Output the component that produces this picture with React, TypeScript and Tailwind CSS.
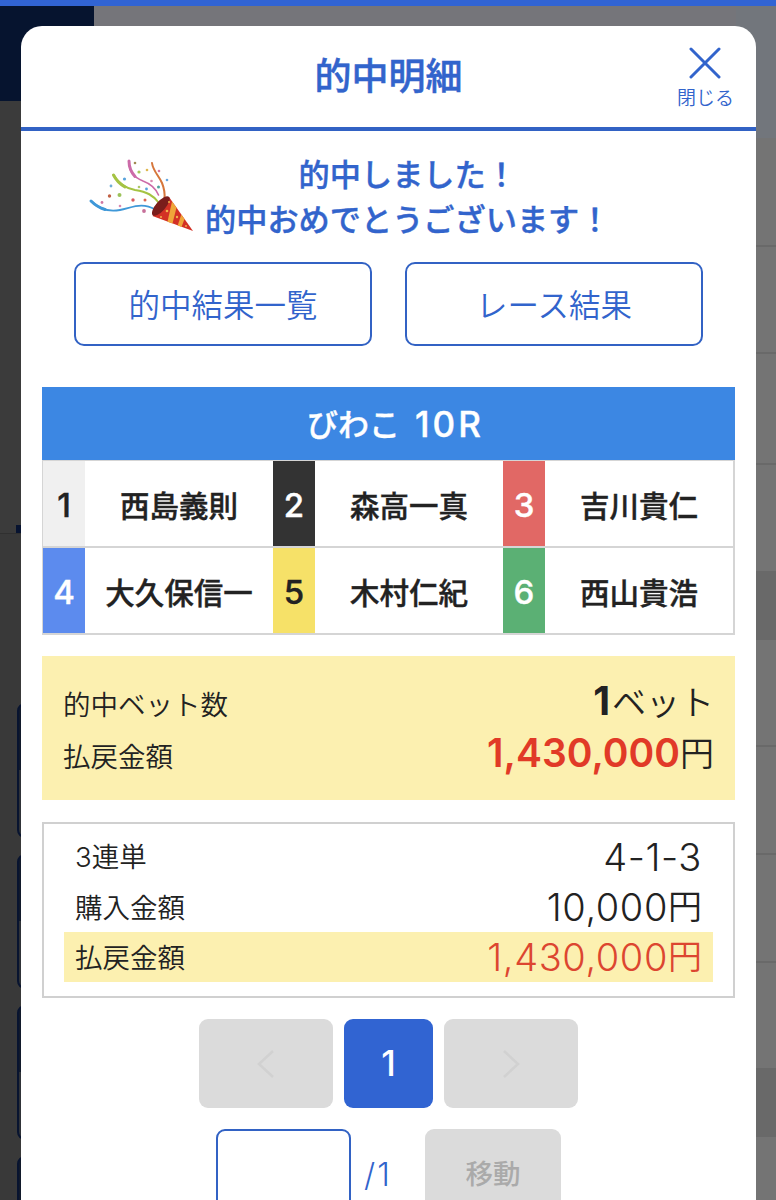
import type { ReactNode } from 'react'
import { clsx } from 'clsx'

type Racer = { no: number; name: string; color: string }

const RACERS: Racer[] = [
  { no: 1, name: '西島義則', color: 'bg-[#f0f0f0] text-[#222]' },
  { no: 2, name: '森高一真', color: 'bg-[#333] text-white' },
  { no: 3, name: '吉川貴仁', color: 'bg-[#e16865] text-white' },
  { no: 4, name: '大久保信一', color: 'bg-[#5c8bee] text-white' },
  { no: 5, name: '木村仁紀', color: 'bg-[#f6e168] text-[#222]' },
  { no: 6, name: '西山貴浩', color: 'bg-[#5bb074] text-white' },
]

// row heights of the dimmed list on the right edge
const LIST_ROWS = [
  'h-[109px]',
  'h-[107px]',
  'h-[111px]',
  'h-[108px]',
  'h-[67px] bg-[#696969]',
  'h-[107px]',
  'h-[108px]',
  'h-[108px]',
  'h-[107px]',
  'h-[67px] bg-[#696969]',
  'h-[107px]',
]

function Num({ children, className }: { children: ReactNode; className?: string }) {
  return <span className={clsx("font-['Inter','Noto_Sans_CJK_JP',sans-serif]", className)}>{children}</span>
}

function Backdrop() {
  return (
    <div className="absolute inset-0 flex flex-col overflow-hidden">
      <div className="h-1.5 shrink-0 bg-[#3164d4]" />
      <div className="flex flex-1 justify-between bg-[#75757a]">
        <div className="flex w-[94px] flex-col">
          <div className="h-[95px] bg-[#06142f]" />
          <div className="flex h-[432px] w-full items-end bg-[#3b3b3b]">
            <div className="ml-4 h-2 w-10 bg-[#071330]" />
          </div>
          <div className="flex flex-1 flex-col items-start gap-[16px] border-t border-[#303030] bg-[#393939] pt-[169px] pl-[17px]">
            {[0, 1, 2, 3].map((i) => (
              <div key={i} className="h-[135px] w-16 shrink-0 rounded-lg border-2 border-[#081430] bg-[linear-gradient(#121a2b_50%,#303338_50%)]" />
            ))}
          </div>
        </div>
        <div className="flex w-[40px] flex-col bg-[#747474]">
          <div className="h-[132px] shrink-0 bg-[#72767c]" />
          {LIST_ROWS.map((row, i) => (
            <div key={i} className={clsx('shrink-0 border-b-2 border-[#696969]', row)} />
          ))}
        </div>
      </div>
    </div>
  )
}

function PartyPopper() {
  return (
    <svg width="106" height="76" viewBox="0 0 106 76" fill="none" className="shrink-0">
      <g strokeLinecap="round">
        <path d="M3 44C12 53 22 55 32 53C46 50 54 45 68 53" stroke="#3f98d8" strokeWidth="1.8" />
        <path d="M3 44C7 48 12 51 17 52.500" stroke="#3f98d8" strokeWidth="3" />
        <path d="M25.500 18C30 26 37 31 47 33C59 35 65 38 71 46" stroke="#a5c343" strokeWidth="2" />
        <path d="M25.500 18C28 23 32 27 37 30" stroke="#a5c343" strokeWidth="3" />
        <path d="M41 4C41 16 46 20 55 24C63 27 68 32 70.500 38" stroke="#cc6ba8" strokeWidth="1.6" />
        <path d="M41 4C41 10 43 15 47 19.500" stroke="#cc6ba8" strokeWidth="3" />
        <path d="M64 6C65 14 71 19 74 26C76.500 32 77 36 76.500 42" stroke="#d6763b" strokeWidth="2" />
      </g>
      <g>
        <circle cx="47" cy="6" r="1.3" fill="#a28a52" />
        <circle cx="51" cy="15" r="1.6" fill="#a5c95a" />
        <circle cx="59" cy="13" r="1.3" fill="#dfb850" />
        <circle cx="71" cy="14" r="1.3" fill="#d777a0" />
        <circle cx="79" cy="23" r="1.3" fill="#65a5df" />
        <circle cx="36.500" cy="22" r="1.6" fill="#58a3dc" />
        <circle cx="23" cy="29" r="1.4" fill="#70add8" />
        <circle cx="63.500" cy="24" r="1.3" fill="#d989b1" />
        <circle cx="51" cy="30" r="1.3" fill="#adc76a" />
        <circle cx="58.500" cy="32" r="1.4" fill="#58a3dc" />
        <circle cx="70.500" cy="30" r="1.5" fill="#4ca49d" />
        <circle cx="21.500" cy="39" r="1.7" fill="#c16144" />
        <circle cx="31.500" cy="38" r="2" fill="#9cc25a" />
        <circle cx="14" cy="45.500" r="1.4" fill="#d178a3" />
        <circle cx="45" cy="43" r="1.7" fill="#d75b60" />
        <circle cx="57" cy="43" r="1.5" fill="#dc6652" />
        <circle cx="32" cy="49" r="1.3" fill="#d989b1" />
        <circle cx="56" cy="54" r="1.9" fill="#c7709a" />
      </g>
      <path d="M64.500 59L81 40L105 74Z" fill="#d33125" />
      <path d="M84 44.500L88.500 50.500L84.500 66.500L79.500 64.700Z" fill="#efa63a" />
      <path d="M93.300 57.500L96.500 62L93.500 70L89.700 68.600Z" fill="#efa63a" />
      <ellipse cx="72.800" cy="49" rx="12.300" ry="4.800" transform="rotate(-49 72.800 49)" fill="#7a1d1b" />
      <g fill="#f0b24b">
        <circle cx="79" cy="54" r="1.300" />
        <circle cx="73" cy="60" r="1" />
        <circle cx="81" cy="45" r="1" />
        <circle cx="89" cy="60" r="1.200" />
        <circle cx="98" cy="69" r="0.900" />
      </g>
    </svg>
  )
}

function ModalHeader() {
  return (
    <header className="relative flex h-[105px] shrink-0 items-center justify-center border-b-4 border-[#3262c4]">
      <h1 className="pb-1 text-[37px] leading-none font-medium [-webkit-text-stroke:0.5px]">的中明細</h1>
      <button className="absolute top-[21px] right-[22px] flex flex-col items-center gap-[8px]">
        <svg width="32" height="32" viewBox="0 0 32 32" stroke="currentColor" strokeWidth="3" strokeLinecap="round">
          <path d="M2 2L30 30M30 2L2 30" />
        </svg>
        <span className="text-[19px] leading-[19px] font-[350]">閉じる</span>
      </button>
    </header>
  )
}

function OutlineButton({ children }: { children: ReactNode }) {
  return (
    <button className="h-[84px] w-[298px] rounded-[10px] border-2 border-[#3262c4] text-[31.5px] font-[350]">
      {children}
    </button>
  )
}

function RaceTable() {
  return (
    <section className="mt-[41px] text-[#222]">
      <h2 className="flex h-[73px] items-center justify-center bg-[#3c87e3] pl-[11px] text-[31px] font-medium text-white [-webkit-text-stroke:0.4px]">
        <span>びわこ</span>
        <Num className="-mr-[3px] ml-[15px] pt-0.5 text-[35px] font-medium tracking-[3px]">10R</Num>
      </h2>
      <div className="grid grid-cols-[230px_230px_1fr] gap-y-0.5 border-t border-r-2 border-b-2 border-l border-[#d5d5d5] bg-[#d5d5d5]">
        {RACERS.map((racer) => (
          <div key={racer.no} className="flex h-[85px] items-center bg-white">
            <Num className={clsx('flex h-full w-[42px] items-center justify-center pt-1 text-[33px] font-medium [-webkit-text-stroke:0.4px]', racer.color)}>
              {racer.no}
            </Num>
            <span className="flex-1 pt-0.5 text-center text-[29.5px] font-medium [-webkit-text-stroke:0.4px]">{racer.name}</span>
          </div>
        ))}
      </div>
    </section>
  )
}

function Summary() {
  return (
    <section className="mt-[21px] h-[144px] bg-[#fcf0b0] px-[21px] pt-[18px] text-[#222]">
      <div className="flex h-[53px] items-center justify-between">
        <span className="pt-1.5 text-[27.5px] font-[350]">的中ベット数</span>
        <span className="flex items-center text-[34px] font-[350]">
          <Num className="mr-0.5 pt-0.5 text-[39px] font-bold">1</Num>ベット
        </span>
      </div>
      <div className="flex h-[51px] items-center justify-between">
        <span className="pt-1.5 text-[27.5px] font-[350]">払戻金額</span>
        <span className="flex items-center text-[34px] font-[350]">
          <Num className="pt-0.5 text-[39px] font-semibold text-[#e13a27]">1,430,000</Num>
          <span className="pb-0.5">円</span>
        </span>
      </div>
    </section>
  )
}

function DetailRow({ label, value, unit, highlight }: { label: ReactNode; value: string; unit?: string; highlight?: boolean }) {
  return (
    <div className={clsx('flex h-[50px] items-center justify-between px-[11px]', highlight && 'bg-[#fcf0b0]')}>
      <span className="text-[27.5px] font-[350]">{label}</span>
      <span className={clsx('flex items-center text-[34px] leading-none font-[350]', highlight && 'text-[#dc4630]')}>
        <Num className="text-[38px] font-light tracking-[0.6px]">{value}</Num>
        {unit && <span className="pb-1">{unit}</span>}
      </span>
    </div>
  )
}

function BetDetail() {
  return (
    <section className="mt-[22px] h-[176px] border-2 border-[#d0d0d0] px-5 pt-[8px] text-[#222]">
      <DetailRow label={<><Num>3</Num>連単</>} value="4-1-3" />
      <DetailRow label="購入金額" value="10,000" unit="円" />
      <DetailRow label="払戻金額" value="1,430,000" unit="円" highlight />
    </section>
  )
}

function Pager() {
  return (
    <nav className="mt-[21px]">
      <div className="flex justify-center gap-[11px]">
        <button disabled className="flex h-[89px] w-[134px] items-center justify-center rounded-[9px] bg-[#dbdbdb] text-[#d1d1d1]">
          <svg width="18" height="30" viewBox="0 0 18 30" fill="none" stroke="currentColor" strokeWidth="2.5">
            <path d="M16 2L2 15L16 28" />
          </svg>
        </button>
        <button className="h-[89px] w-[89px] rounded-[9px] bg-[#3164d2] text-white">
          <Num className="text-[35px] font-medium">1</Num>
        </button>
        <button disabled className="flex h-[89px] w-[134px] items-center justify-center rounded-[9px] bg-[#dbdbdb] text-[#d1d1d1]">
          <svg width="18" height="30" viewBox="0 0 18 30" fill="none" stroke="currentColor" strokeWidth="2.5">
            <path d="M2 2L16 15L2 28" />
          </svg>
        </button>
      </div>
      <div className="mt-[21px] flex items-center justify-center">
        <input className="h-[89px] w-[135px] rounded-[9px] border-2 border-[#3262c4]" />
        <Num className="w-[74px] pt-0.5 pl-[13px] text-[32px] font-light tracking-[2px]">/1</Num>
        <button disabled className="h-[89px] w-[136px] rounded-[9px] bg-[#dbdbdb] pb-0.5 text-[27.5px] font-medium text-[#aaa]">
          移動
        </button>
      </div>
    </nav>
  )
}

export default function App() {
  return (
    <div className="relative h-[1200px] w-[776px] overflow-hidden font-['Noto_Sans_CJK_JP',sans-serif]">
      <Backdrop />
      <main className="relative mt-[26px] ml-[21px] flex h-[1240px] w-[735px] flex-col overflow-hidden rounded-t-[21px] bg-white text-[#3264cc]">
        <ModalHeader />
        <div className="px-[21px] pt-[19px]">
          <div className="flex pl-[46px]">
            <div className="pt-[7px]">
              <PartyPopper />
            </div>
            <p className="ml-[11px] text-center text-[31.2px] leading-[45px] font-medium whitespace-nowrap [-webkit-text-stroke:0.4px]">
              的中しました！
              <br />
              的中おめでとうございます！
            </p>
          </div>
          <div className="mt-[22px] flex justify-center gap-[33px]">
            <OutlineButton>的中結果一覧</OutlineButton>
            <OutlineButton>レース結果</OutlineButton>
          </div>
          <RaceTable />
          <Summary />
          <BetDetail />
          <Pager />
        </div>
      </main>
    </div>
  )
}
